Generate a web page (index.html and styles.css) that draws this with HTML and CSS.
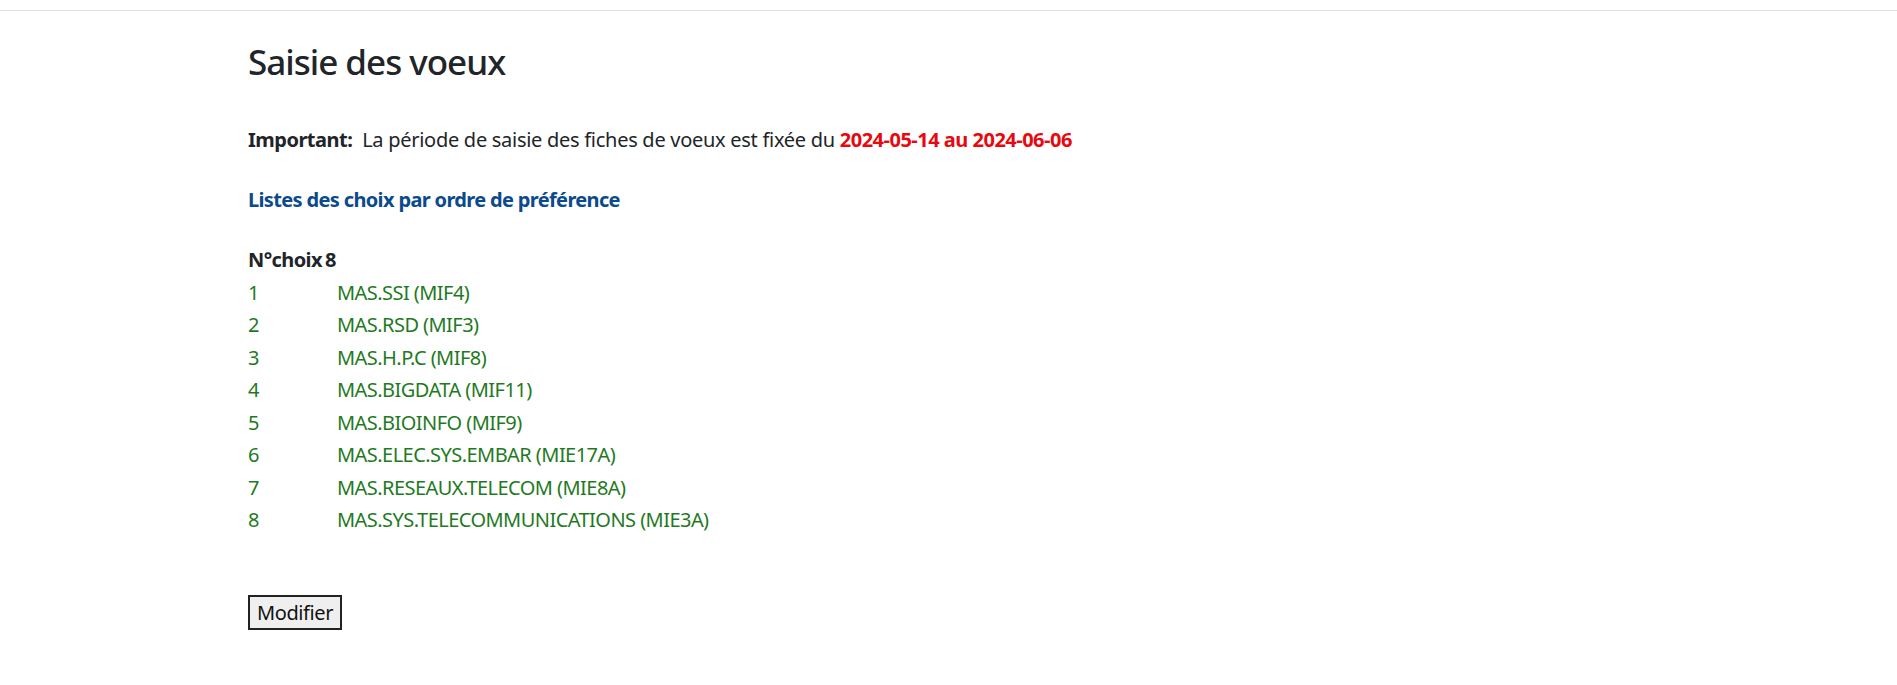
FILE: index.html
```html
<!DOCTYPE html>
<html lang="fr">
<head>
<meta charset="utf-8">
<title>Saisie des voeux</title>
<link rel="stylesheet" href="styles.css">
</head>
<body>
<div class="topbar"></div>
<main class="container">
  <h1 class="title">Saisie des voeux</h1>
  <p class="notice"><strong>Important:</strong>&nbsp; La période de saisie des fiches de voeux est fixée du <span class="dates">2024-05-14 au 2024-06-06</span></p>
  <h2 class="subtitle">Listes des choix par ordre de préférence</h2>
  <div class="choices">
    <div class="choices-head"><span>N°choix</span><span>8</span></div>
    <div class="row"><span class="num">1</span><span class="name">MAS.SSI (MIF4)</span></div>
    <div class="row"><span class="num">2</span><span class="name">MAS.RSD (MIF3)</span></div>
    <div class="row"><span class="num">3</span><span class="name">MAS.H.P.C (MIF8)</span></div>
    <div class="row"><span class="num">4</span><span class="name">MAS.BIGDATA (MIF11)</span></div>
    <div class="row"><span class="num">5</span><span class="name">MAS.BIOINFO (MIF9)</span></div>
    <div class="row"><span class="num">6</span><span class="name">MAS.ELEC.SYS.EMBAR (MIE17A)</span></div>
    <div class="row"><span class="num">7</span><span class="name">MAS.RESEAUX.TELECOM (MIE8A)</span></div>
    <div class="row"><span class="num">8</span><span class="name">MAS.SYS.TELECOMMUNICATIONS (MIE3A)</span></div>
  </div>
  <button class="btn" type="button">Modifier</button>
</main>
</body>
</html>
```

FILE: styles.css
```css
html, body {
  margin: 0;
  padding: 0;
  background: #fff;
}
body {
  font-family: "Noto Sans", "Open Sans", sans-serif;
  font-size: 20px;
  line-height: 30px;
  letter-spacing: -0.28px;
  color: #212529;
}
.topbar {
  height: 10px;
  border-bottom: 1px solid #e0e0e0;
}
.container {
  padding-left: 248px;
}
.title {
  margin: 30px 0 0;
  font-size: 35px;
  line-height: 42px;
  font-weight: 500;
  letter-spacing: -1px;
  color: #212529;
}
.notice {
  margin: 42px 0 0;
}
.notice strong {
  font-weight: 700;
  letter-spacing: -0.5px;
}
.dates {
  color: #e8080f;
  font-weight: 700;
  letter-spacing: -0.5px;
}
.subtitle {
  margin: 30px 0 0;
  font-size: 20px;
  line-height: 30px;
  font-weight: 700;
  letter-spacing: -0.65px;
  color: #0b4a8c;
}
.choices {
  margin-top: 29px;
  line-height: 32.5px;
}
.choices-head {
  display: flex;
  gap: 3px;
  font-weight: 700;
  letter-spacing: -0.6px;
  color: #212529;
}
.row {
  display: grid;
  grid-template-columns: 89px auto;
  letter-spacing: -0.55px;
  color: #1f7a1f;
}
.btn {
  display: block;
  margin-top: 58px;
  height: 35px;
  padding: 0 7px;
  font-family: inherit;
  font-size: 20px;
  line-height: 29px;
  letter-spacing: -0.4px;
  color: #111;
  background: #efefef;
  border: 2px solid #222;
  border-radius: 0;
}
```
